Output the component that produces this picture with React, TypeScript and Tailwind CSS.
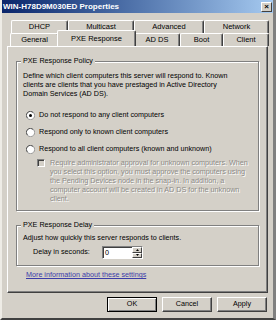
import React from "react";

const bg = "bg-[#d4d0c8]";

const Tab = ({ label, w, active = false }: { label: string; w: string; active?: boolean }) => (
  <div
    className={`${w} ${
      active
        ? "h-[16px] -mt-[3px] -mx-[2px] z-10 border-b-0 bg-[#d4d0c8]"
        : "h-[13px]"
    } flex items-center justify-center border-t border-l border-white border-r border-r-[#404040] shadow-[inset_-1px_0_0_#808080] rounded-t-[2px] text-[7.5px] text-black`}
  >
    {label}
  </div>
);

const Radio = ({ checked = false, label }: { checked?: boolean; label: string }) => (
  <div className="flex items-center gap-[4px] h-[10px]">
    <svg width="9" height="9" viewBox="0 0 12 12">
      <circle cx="6" cy="6" r="5.5" fill="#ffffff" stroke="#808080" strokeWidth="1" />
      <path d="M2 9.5 A5 5 0 0 1 9.5 2" fill="none" stroke="#404040" strokeWidth="1" />
      {checked && <circle cx="6" cy="6" r="2" fill="#000" />}
    </svg>
    <span>{label}</span>
  </div>
);

const GroupBox = ({
  title,
  className,
  children,
}: {
  title: string;
  className: string;
  children: React.ReactNode;
}) => (
  <div
    className={`relative border border-[#808080] shadow-[inset_1px_1px_0_#ffffff,1px_1px_0_#ffffff] ${className}`}
  >
    <span className={`absolute -top-[6px] left-[4px] px-[2px] leading-[10px] ${bg}`}>
      {title}
    </span>
    {children}
  </div>
);

const Button = ({ label, isDefault = false }: { label: string; isDefault?: boolean }) => (
  <div
    className={`w-[50px] h-[15px] flex items-center justify-center ${bg} border ${
      isDefault
        ? "border-black shadow-[inset_1px_1px_0_#ffffff,inset_-1px_-1px_0_#808080]"
        : "border-t-white border-l-white border-r-[#404040] border-b-[#404040] shadow-[inset_-1px_-1px_0_#808080]"
    }`}
  >
    {label}
  </div>
);

const approvalLines = [
  "Require administrator approval for unknown computers. When",
  "you select this option, you must approve the computers using",
  "the Pending Devices node in the snap-in. In addition, a",
  "computer account will be created in AD DS for the unknown",
  "client.",
];

export default function App() {
  return (
    <div
      className={`w-[276px] h-[320px] ${bg} flex flex-col border-l-2 border-l-[#eeece6] border-r-[3px] border-r-[#808080] border-b-2 border-b-[#404040] text-[7.2px] text-black overflow-hidden`}
      style={{ fontFamily: '"Liberation Sans", Arial, sans-serif' }}
    >
      {/* title bar */}
      <div className="h-[13px] -ml-[2px] flex items-center justify-between pl-[3px] pr-[1px] bg-gradient-to-r from-[#0a246a] to-[#a6caf0]">
        <span className="text-white font-bold text-[8px] leading-none">WIN-H78D9M030ED Properties</span>
        <div className="w-[11px] h-[10px] bg-[#d4d0c8] border border-t-white border-l-white border-r-[#404040] border-b-[#404040] flex items-center justify-center text-[8px] font-bold leading-none">
          ×
        </div>
      </div>

      {/* tabs */}
      <div className="mt-[7px] ml-[7px] flex flex-col">
        <div className="flex ml-[2px]">
          <Tab label="DHCP" w="w-[57px]" />
          <Tab label="Multicast" w="w-[66px]" />
          <Tab label="Advanced" w="w-[70px]" />
          <Tab label="Network" w="w-[65px]" />
        </div>
        <div className="flex ml-[1px] relative z-10">
          <Tab label="General" w="w-[49px]" />
          <Tab label="PXE Response" w="w-[79px]" active />
          <Tab label="AD DS" w="w-[46px]" />
          <Tab label="Boot" w="w-[43px]" />
          <Tab label="Client" w="w-[46px]" />
        </div>
      </div>

      {/* tab panel */}
      <div className="ml-[5px] w-[261px] h-[247px] border border-t-white border-l-white border-r-[#404040] border-b-[#404040] shadow-[inset_-1px_-1px_0_#808080] flex flex-col pl-[8px] pt-[14px]">
        <GroupBox title="PXE Response Policy" className="w-[243px] h-[150px] pl-[6px] pt-[9px]">
          <p className="leading-[9px] w-[212px]">
            Define which client computers this server will respond to. Known clients are clients that you have
            prestaged in Active Directory Domain Services (AD DS).
          </p>
          <div className="mt-[12px] pl-[3px] flex flex-col gap-[7px]">
            <Radio checked label="Do not respond to any client computers" />
            <Radio label="Respond only to known client computers" />
            <Radio label="Respond to all client computers (known and unknown)" />
          </div>
          <div className="mt-[4px] ml-[14px] flex gap-[5px]">
            <div className="w-[8px] h-[8px] mt-[1px] shrink-0 border border-t-[#808080] border-l-[#808080] border-r-white border-b-white bg-[#d4d0c8] shadow-[inset_1px_1px_0_#404040]" />
            <p className="leading-[9px] whitespace-nowrap text-[#8c8a86] [text-shadow:1px_1px_0_#ffffff]">
              {approvalLines.map((line) => (
                <span key={line} className="block">
                  {line}
                </span>
              ))}
            </p>
          </div>
        </GroupBox>

        <GroupBox title="PXE Response Delay" className="mt-[14px] w-[243px] h-[41px] pl-[6px] pt-[7px]">
          <p className="leading-[9px]">Adjust how quickly this server responds to clients.</p>
          <div className="mt-[4px] ml-[10px] flex items-center">
            <span className="w-[69px]">Delay in seconds:</span>
            <div className="w-[41px] h-[13px] flex border border-t-[#808080] border-l-[#808080] border-r-white border-b-white bg-white">
              <div className="flex-1 pl-[2px] leading-[11px] shadow-[inset_1px_1px_0_#404040]">0</div>
              <div className="w-[10px] flex flex-col">
                <div className={`flex-1 ${bg} border border-t-white border-l-white border-r-[#404040] border-b-[#404040] flex items-center justify-center`}>
                  <svg width="3" height="2" viewBox="0 0 3 2"><path d="M0 2 L1.5 0 L3 2 Z" fill="#000" /></svg>
                </div>
                <div className={`flex-1 ${bg} border border-t-white border-l-white border-r-[#404040] border-b-[#404040] flex items-center justify-center`}>
                  <svg width="3" height="2" viewBox="0 0 3 2"><path d="M0 0 L1.5 2 L3 0 Z" fill="#000" /></svg>
                </div>
              </div>
            </div>
          </div>
        </GroupBox>

        <a className="mt-[4px] ml-[10px] leading-[9px] text-[#3c3ca8] underline">
          More information about these settings
        </a>
      </div>

      {/* buttons */}
      <div className="mt-[4px] ml-[105px] flex gap-[5px]">
        <Button label="OK" isDefault />
        <Button label="Cancel" />
        <Button label="Apply" />
      </div>
    </div>
  );
}
